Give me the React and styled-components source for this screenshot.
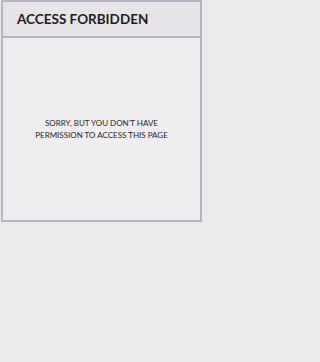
import styled, { createGlobalStyle } from "styled-components";

const GlobalStyle = createGlobalStyle`
    body {
        margin: 0;
        background: #eaeaea;
        font-family: Lato, "Noto Sans", sans-serif;
    }
`;

const Page = styled.div`
    width: 204px;
    min-height: 362px;
    padding: 0 2px 0 1px;
    box-sizing: border-box;
`;

const Card = styled.section`
    display: flex;
    flex-direction: column;
    height: 222px;
    box-sizing: border-box;
    border: 2px solid #b7b3c9;
    background: #efedf0;
`;

const Header = styled.header`
    display: flex;
    align-items: center;
    height: 36px;
    box-sizing: border-box;
    padding: 0 0 0 14px;
    border-bottom: 2px solid #b7b3c9;
    background: #e6e4e8;
`;

const Title = styled.h1`
    margin: 0;
    font-size: 13.5px;
    font-weight: 700;
    color: #1d1c24;
`;

const Body = styled.div`
    flex: 1;
    display: flex;
    align-items: center;
    justify-content: center;
`;

const Message = styled.p`
    margin: 0;
    text-align: center;
    font-size: 8px;
    line-height: 12px;
    color: #26252c;
    text-transform: uppercase;
`;

const App = () => {
    return (
        <>
            <GlobalStyle />
            <Page>
                <Card>
                    <Header>
                        <Title>ACCESS FORBIDDEN</Title>
                    </Header>
                    <Body>
                        <Message>
                            Sorry, but you don't have<br />
                            permission to access this page
                        </Message>
                    </Body>
                </Card>
            </Page>
        </>
    );
};

export default App;
